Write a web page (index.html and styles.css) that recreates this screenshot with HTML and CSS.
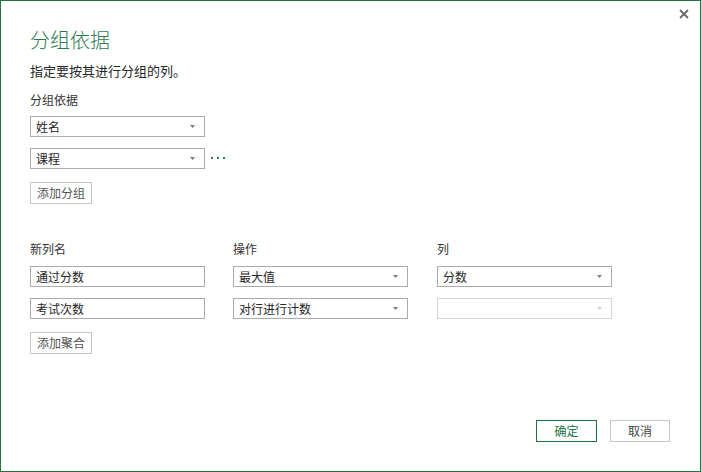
FILE: index.html
```html
<!DOCTYPE html>
<html lang="zh-CN">
<head>
<meta charset="utf-8">
<title>分组依据</title>
<link rel="stylesheet" href="styles.css">
</head>
<body>
<div class="dialog">
  <button class="close" aria-label="关闭"><svg width="10" height="10" viewBox="0 0 10 10"><path d="M1 1L9 9M9 1L1 9" stroke="#6b6b6b" stroke-width="1.8" fill="none"/></svg></button>
  <h1 class="title">分组依据</h1>
  <p class="subtitle">指定要按其进行分组的列。</p>
  <div class="label group-label">分组依据</div>
  <div class="group-row first">
    <div class="select"><span>姓名</span><svg class="arrow" width="5" height="3" viewBox="0 0 5 3"><polygon points="0,0 5,0 2.5,3" fill="#7a7a7a"/></svg></div>
  </div>
  <div class="group-row second-group">
    <div class="select"><span>课程</span><svg class="arrow" width="5" height="3" viewBox="0 0 5 3"><polygon points="0,0 5,0 2.5,3" fill="#7a7a7a"/></svg></div>
    <span class="more"><b></b><b></b><b></b></span>
  </div>
  <button class="btn add-btn">添加分组</button>

  <div class="agg">
    <div class="label">新列名</div>
    <div class="label">操作</div>
    <div class="label">列</div>

    <div class="input"><span>通过分数</span></div>
    <div class="select"><span>最大值</span><svg class="arrow" width="5" height="3" viewBox="0 0 5 3"><polygon points="0,0 5,0 2.5,3" fill="#7a7a7a"/></svg></div>
    <div class="select"><span>分数</span><svg class="arrow" width="5" height="3" viewBox="0 0 5 3"><polygon points="0,0 5,0 2.5,3" fill="#7a7a7a"/></svg></div>

    <div class="input second"><span>考试次数</span></div>
    <div class="select second"><span>对行进行计数</span><svg class="arrow" width="5" height="3" viewBox="0 0 5 3"><polygon points="0,0 5,0 2.5,3" fill="#7a7a7a"/></svg></div>
    <div class="select second disabled"><span></span><svg class="arrow" width="5" height="3" viewBox="0 0 5 3"><polygon points="0,0 5,0 2.5,3" fill="#cfcfcf"/></svg></div>
  </div>
  <button class="btn add-btn agg-btn">添加聚合</button>

  <div class="footer">
    <button class="btn ok">确定</button>
    <button class="btn cancel">取消</button>
  </div>
</div>
</body>
</html>
```

FILE: styles.css
```css
html, body {
  margin: 0;
  padding: 0;
  background: #ffffff;
}

.dialog {
  position: relative;
  width: 701px;
  height: 472px;
  box-sizing: border-box;
  border: 1px solid #217346;
  padding: 27px 30px 29px 29px;
  display: flex;
  flex-direction: column;
  align-items: flex-start;
  font-family: "Noto Sans CJK SC", "Noto Sans", sans-serif;
  color: #262626;
  background: #ffffff;
}

.close {
  position: absolute;
  top: 8px;
  right: 11px;
  width: 10px;
  height: 10px;
  padding: 0;
  margin: 0;
  border: 0;
  background: transparent;
  display: block;
}
.close svg { display: block; }

.title {
  margin: 0;
  font-size: 20px;
  line-height: 24px;
  font-weight: 300;
  color: #2b7b4f;
}

.subtitle {
  margin: 10px 0 0;
  font-size: 13px;
  line-height: 17px;
}

.label {
  font-size: 12px;
  line-height: 16px;
  color: #333333;
}

.group-label {
  margin-top: 13px;
}

.group-row {
  display: flex;
  align-items: flex-start;
}
.group-row.first { margin-top: 8px; }
.group-row.second-group { margin-top: 11px; }

.select, .input {
  width: 175px;
  height: 21px;
  box-sizing: border-box;
  border: 1px solid #ababab;
  background: #ffffff;
  display: flex;
  align-items: center;
  padding: 0 9px 0 5px;
  font-size: 12px;
  line-height: 16px;
  color: #262626;
}
.select span, .input span { flex: 1; white-space: nowrap; }
.select .arrow { display: block; flex: none; }
.select.disabled { border-color: #d4d4d4; }

.more {
  display: flex;
  gap: 4px;
  margin: 9px 0 0 6px;
}
.more b {
  display: block;
  width: 2px;
  height: 2px;
  background: #2a8050;
}

.btn {
  height: 22px;
  box-sizing: border-box;
  border: 1px solid #c6c6c6;
  background: #ffffff;
  font-family: "Noto Sans CJK SC", "Noto Sans", sans-serif;
  font-size: 12px;
  line-height: 16px;
  color: #555555;
  padding: 0;
  margin: 0;
  text-align: center;
}

.add-btn {
  width: 62px;
  margin-top: 13px;
}

.agg {
  margin-top: 37px;
  display: grid;
  grid-template-columns: 203px 204px 175px;
  row-gap: 9px;
}
.agg .second { margin-top: 2px; }

.agg-btn { margin-top: 13px; }

.footer {
  margin-top: auto;
  align-self: stretch;
  display: flex;
  justify-content: flex-end;
  gap: 13px;
}

.ok {
  width: 61px;
  border-color: #217346;
  color: #217346;
}

.cancel {
  width: 60px;
  color: #444444;
}
```
